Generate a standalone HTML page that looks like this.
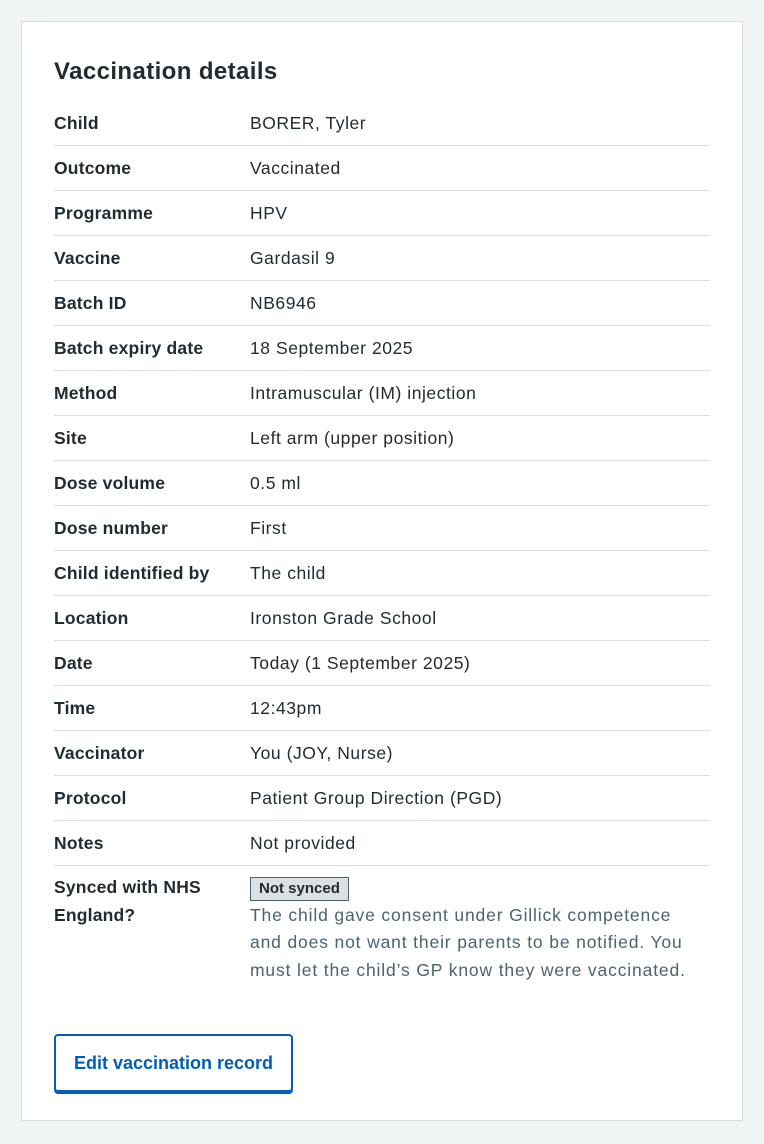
<!DOCTYPE html>
<html><head><meta charset="utf-8"><style>
body{margin:0;background:#f0f4f5;font-family:"Liberation Sans",sans-serif;color:#212b32;}
.card{position:absolute;left:21px;top:21px;width:720px;height:1098px;background:#fff;border:1px solid #d8dde0;}
h2{position:absolute;left:32px;top:33px;margin:0;font-size:24px;line-height:34px;font-weight:bold;letter-spacing:0.4px;}
.list{position:absolute;left:32px;top:79px;width:656px;}
.row{display:flex;height:44px;border-bottom:1px solid #d8dde0;align-items:center;font-size:17.5px;letter-spacing:0.55px;}
.k{width:196px;font-weight:bold;letter-spacing:0.2px;}
.v{flex:1;}
.last{display:flex;padding-top:8px;font-size:17.5px;line-height:27.5px;letter-spacing:0.4px;}
.tag{display:inline-block;background:#dbe0e3;border:1px solid #4c6272;color:#212b32;font-weight:bold;font-size:15px;line-height:22px;padding:0 8px;letter-spacing:0;}
.hint{color:#4c6272;white-space:nowrap;letter-spacing:0.85px;}
.btn{position:absolute;left:32px;top:1012px;width:235px;height:54px;border:2px solid #005eb8;border-radius:4px;box-shadow:0 2px 0 #005eb8;color:#005eb8;font-weight:bold;font-size:18px;display:flex;align-items:center;justify-content:center;box-sizing:content-box;}
</style></head><body>
<div class="card">
<h2>Vaccination details</h2>
<div class="list">
<div class="row"><div class="k">Child</div><div class="v">BORER, Tyler</div></div>
<div class="row"><div class="k">Outcome</div><div class="v">Vaccinated</div></div>
<div class="row"><div class="k">Programme</div><div class="v">HPV</div></div>
<div class="row"><div class="k">Vaccine</div><div class="v">Gardasil 9</div></div>
<div class="row"><div class="k">Batch ID</div><div class="v">NB6946</div></div>
<div class="row"><div class="k">Batch expiry date</div><div class="v">18 September 2025</div></div>
<div class="row"><div class="k">Method</div><div class="v">Intramuscular (IM) injection</div></div>
<div class="row"><div class="k">Site</div><div class="v">Left arm (upper position)</div></div>
<div class="row"><div class="k">Dose volume</div><div class="v">0.5 ml</div></div>
<div class="row"><div class="k">Dose number</div><div class="v">First</div></div>
<div class="row"><div class="k">Child identified by</div><div class="v">The child</div></div>
<div class="row"><div class="k">Location</div><div class="v">Ironston Grade School</div></div>
<div class="row"><div class="k">Date</div><div class="v">Today (1 September 2025)</div></div>
<div class="row"><div class="k">Time</div><div class="v">12:43pm</div></div>
<div class="row"><div class="k">Vaccinator</div><div class="v">You (JOY, Nurse)</div></div>
<div class="row"><div class="k">Protocol</div><div class="v">Patient Group Direction (PGD)</div></div>
<div class="row"><div class="k">Notes</div><div class="v">Not provided</div></div>
<div class="last"><div class="k">Synced with NHS England?</div><div class="v"><span class="tag">Not synced</span><div class="hint">The child gave consent under Gillick competence<br>and does not want their parents to be notified. You<br>must let the child’s GP know they were vaccinated.</div></div></div>
</div>
<div class="btn">Edit vaccination record</div>
</div>
</body></html>
